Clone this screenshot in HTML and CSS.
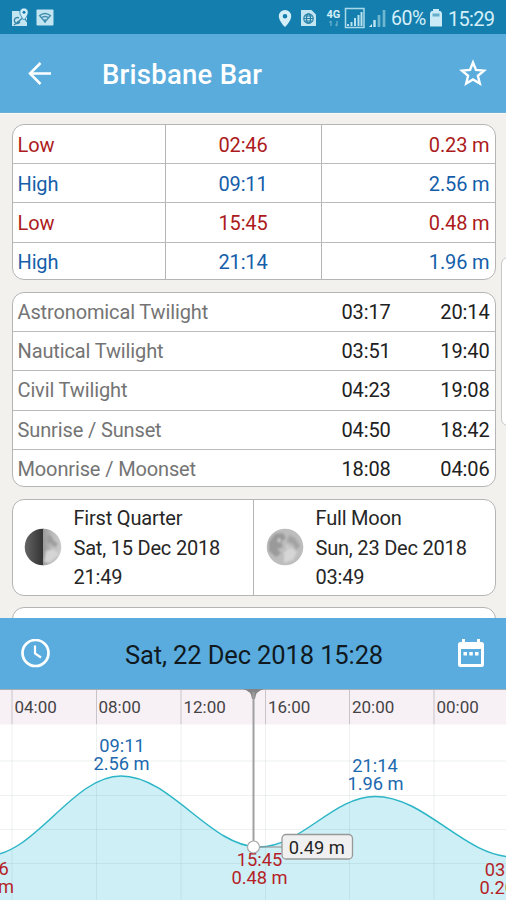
FILE: index.html
```html
<!DOCTYPE html>
<html lang="en">
<head>
<meta charset="utf-8">
<title>Brisbane Bar</title>
<link rel="stylesheet" href="styles.css">
</head>
<body>
<div class="app">
  <div class="status">
    <svg class="status-left" width="40" height="20" viewBox="0 0 40 20">
      <path d="M0 3h12l3 5v10H0z" fill="#c3e5f2"/>
      <path d="M8 14H5M8 14a3 3 0 1 1-1-4M2 17 12 9l3 5" fill="none" stroke="#3486a8" stroke-width="1.3"/>
      <path d="M12 0a4.2 4.2 0 0 0-4.2 4.200C7.800 7.500 12 12 12 12s4.200-4.500 4.200-7.800A4.200 4.200 0 0 0 12 0z" fill="#d5eff9" stroke="#147fae" stroke-width=".8"/>
      <circle cx="12" cy="4.300" r="1.500" fill="#147fae"/>
      <rect x="24.500" y="1.500" width="17" height="16" rx="1" fill="#c3e5f2"/>
      <path d="M27 8q6-5 12 0M29 10q4-3 8 0M28 8l5 6 5-6M33 11v4" fill="none" stroke="#3f8eae" stroke-width="1.300"/>
    </svg>
    <div class="status-right">
      <svg width="110" height="24" viewBox="0 0 110 24">
        <path fill-rule="evenodd" d="M7 4a6.200 6.200 0 0 0-6.200 6.200C.8 15 7 21 7 21s6.200-6 6.200-10.800A6.200 6.200 0 0 0 7 4zm0 4a2.300 2.300 0 1 1 0 4.600A2.300 2.300 0 0 1 7 8z" fill="#d5eff9"/>
        <path d="M23 4h10.500l4.500 4.500V20H23z" fill="#c3e5f2"/>
        <g fill="none" stroke="#247fa4" stroke-width="1.200"><circle cx="30.500" cy="12.500" r="4.700"/><ellipse cx="30.500" cy="12.500" rx="2" ry="4.700"/><path d="M26 12.500h9M27 10h7M27 15h7"/></g>
        <text class="net" x="48.500" y="12">4G</text>
        <path d="M53 20v-5m-1.500 1.500L53 15M59 15v5m-1.500-1.500L59 20" fill="none" stroke="#61adcb" stroke-width="1.400"/>
        <rect x="67.500" y="2.500" width="18.500" height="19" fill="none" stroke="#a9d9ea" stroke-width="1.500"/>
        <path d="M70 20v-2M73.500 20v-4M77 20v-8M80.500 20V9M83.500 20V6" stroke="#b8e2f0" stroke-width="2"/>
        <path d="M91 21h3v-3z" fill="#d5eff9"/>
        <path d="M96.500 21v-7" stroke="#b8e2f0" stroke-width="2.500"/>
        <path d="M101 21V9M106 21V4" stroke="#6fb6d1" stroke-width="2.700"/>
      </svg>
      <span class="pct">60%</span>
      <svg class="battery" width="12" height="20" viewBox="0 0 12 20"><path d="M3 1h6v2h1.500L12 5v13.500H0V5l1.500-2H3z" fill="#c9eaf6"/><path d="M2.500 5.500h7v3h-7z" fill="#67aeca"/></svg>
      <span class="clock">15:29</span>
    </div>
  </div>
  <div class="header">
    <svg class="back" width="24" height="24" viewBox="0 0 24 24"><path d="M23 12.500H2M12.500 2 2 12.500 12.500 23" fill="none" stroke="#fff" stroke-width="2.500"/></svg>
    <div class="title">Brisbane Bar</div>
    <svg class="star" width="28" height="28" viewBox="0 0 28 28"><path d="m14 3.500 3 7.400 8 .7-6.100 5.200 1.900 7.700-6.800-4.100-6.800 4.100 1.900-7.700L3 11.600l8-.7z" fill="none" stroke="#fff" stroke-width="2.400"/></svg>
  </div>

  <div class="content">
    <div class="card tides">
      <div class="row low"><span>Low</span><span>02:46</span><span>0.23 m</span></div>
      <div class="row high"><span>High</span><span>09:11</span><span>2.56 m</span></div>
      <div class="row low"><span>Low</span><span>15:45</span><span>0.48 m</span></div>
      <div class="row high"><span>High</span><span>21:14</span><span>1.96 m</span></div>
    </div>
    <div class="card sun">
      <div class="row"><span>Astronomical Twilight</span><span>03:17</span><span>20:14</span></div>
      <div class="row"><span>Nautical Twilight</span><span>03:51</span><span>19:40</span></div>
      <div class="row"><span>Civil Twilight</span><span>04:23</span><span>19:08</span></div>
      <div class="row"><span>Sunrise / Sunset</span><span>04:50</span><span>18:42</span></div>
      <div class="row"><span>Moonrise / Moonset</span><span>18:08</span><span>04:06</span></div>
    </div>
    <div class="card moons">
      <div class="phase">
        <svg width="38" height="38" viewBox="0 0 38 38">
          <defs>
            <linearGradient id="dark"><stop offset="0" stop-color="#666"/><stop offset="1" stop-color="#303030"/></linearGradient>
            <linearGradient id="lit"><stop offset="0" stop-color="#999"/><stop offset=".5" stop-color="#bcbcbc"/><stop offset="1" stop-color="#ccc"/></linearGradient>
            <filter id="soft"><feGaussianBlur stdDeviation="1.300"/></filter>
            <clipPath id="disc"><circle cx="19" cy="19" r="18.300"/></clipPath>
          </defs>
          <g clip-path="url(#disc)">
            <path d="M0 0h20v38H0z" fill="url(#dark)"/><path d="M19 0h19v38H19z" fill="url(#lit)"/>
            <g filter="url(#soft)"><path d="m23 6 4 2 3 5 4 3-3 3-5-4-3 0z" fill="#9c9c9c"/><path d="m22 23 8-2 5 5-9 9-6-1z" fill="#d5d5d5"/></g>
          </g>
        </svg>
        <div>First Quarter<br>Sat, 15 Dec 2018<br>21:49</div>
      </div>
      <div class="phase">
        <svg width="38" height="38" viewBox="0 0 38 38">
          <g clip-path="url(#disc)">
            <path d="M0 0h38v38H0z" fill="#bdbdbd"/>
            <g filter="url(#soft)"><path d="m3 14 6-8 8-1 3 5-5 4 2 5-6 2 4 4-5 4-7-6z" fill="#9a9a9a"/><path d="m23 7 6 3 5 8-4 4-3-6-6-2z" fill="#a3a3a3"/><path d="m18 24 7-5 6 5-4 8-9 3z" fill="#d6d6d6"/><path d="m12 10 3 2-3 3zM20 17l3 1-2 3z" fill="#ddd"/></g>
          </g>
        </svg>
        <div>Full Moon<br>Sun, 23 Dec 2018<br>03:49</div>
      </div>
    </div>
    <div class="card next"></div>
    <div class="peek"></div>
  </div>

  <div class="datebar">
    <svg width="30" height="30" viewBox="0 0 30 30"><circle cx="14.500" cy="14" r="13" fill="none" stroke="#fff" stroke-width="2.700"/><path d="M14 6.500v8l6 4" fill="none" stroke="#fff" stroke-width="2.200"/></svg>
    <div class="date">Sat, 22 Dec 2018 15:28</div>
    <svg width="28" height="30" viewBox="0 0 28 30"><path fill-rule="evenodd" d="M5 0h3v3h12V0h3v3h1.500A2.500 2.500 0 0 1 27 5.500v20a2.500 2.500 0 0 1-2.500 2.500h-21A2.500 2.500 0 0 1 1 25.500v-20A2.500 2.500 0 0 1 3.500 3H5zM4 10v15h20V10z" fill="#fff"/><path d="M6.500 13H10v3.500H6.500zm5.800 0h3.500v3.500h-3.500zm5.700 0h3.500v3.500H18z" fill="#fff"/></svg>
  </div>

  <svg class="chart" width="506" height="211" viewBox="0 689 506 211">
    <rect x="0" y="689" width="506" height="211" fill="#fff"/>
    <rect x="0" y="689" width="506" height="35.500" fill="#f7f1f6"/>
    <path class="area" d="M-14 856C35 856 72 776 121 776C171 776 210 847 259 847C301 847 333 796.500 375 796.500C426 796.500 464 857 514 857V900H-14z"/>
    <path class="grid" d="M0 761h506M0 795.500h506M0 829.500h506M0 863.500h506M12 724v176M96.500 724v176M181 724v176M265.500 724v176M349.500 724v176M434 724v176"/>
    <path class="ticks" d="M12 690v34M96.500 690v34M181 690v34M265.500 690v34M349.500 690v34M434 690v34"/>
    <path class="curve" d="M-14 856C35 856 72 776 121 776C171 776 210 847 259 847C301 847 333 796.500 375 796.500C426 796.500 464 857 514 857"/>
    <path d="M0 689.200h506" stroke="#8b98a1" stroke-width="1.200"/>
    <path d="M243 689h21q-8.500 2-9 10h-3q-.5-8-9-10z" fill="#858585"/>
    <path d="M253.500 692v150" stroke="#a0a0a0" stroke-width="2"/>
    <path d="M259 847h23" stroke="#999" stroke-width="1.200"/>
    <g class="hours"><text x="14.500" y="713">04:00</text><text x="98.500" y="713">08:00</text><text x="183.500" y="713">12:00</text><text x="268" y="713">16:00</text><text x="352" y="713">20:00</text><text x="436.500" y="713">00:00</text></g>
    <g class="marks high"><text x="122" y="751.500">09:11</text><text x="121.500" y="769.500">2.56 m</text><text x="375" y="772">21:14</text><text x="375.500" y="790">1.96 m</text></g>
    <g class="marks low"><text x="-14" y="874.500">02:46</text><text x="-14" y="892.500">0.23 m</text><text x="259.500" y="865.500">15:45</text><text x="259.500" y="883.500">0.48 m</text><text x="507.500" y="875.500">03:53</text><text x="507.500" y="893.500">0.20 m</text></g>
    <circle cx="253.500" cy="847" r="6" fill="#fff" stroke="#aaa" stroke-width="1.200"/>
    <rect x="282" y="834.500" width="70.500" height="24.500" rx="4" fill="#f0f0f0" stroke="#999" stroke-width="1.300"/>
    <text class="tip" x="316.800" y="853.500">0.49 m</text>
  </svg>
</div>
</body>
</html>
```
FILE: styles.css
```css
* { box-sizing: border-box; }
body { margin: 0; font-family: Roboto, "Liberation Sans", sans-serif; }
.app { width: 506px; height: 900px; overflow: hidden; display: flex; flex-direction: column; background: #f3f1ed; }
svg { display: block; flex: none; }

.status { flex: none; height: 34px; background: #147fae; display: flex; justify-content: space-between; padding: 0 12px; color: #d5eff9; }
.status-left { margin-top: 8px; overflow: visible; }
.status-right { display: flex; align-items: center; height: 36px; font-size: 20px; }
.status-right > svg:first-child { margin: -1px 3px 0 0; }
.status-right .battery { margin: 0 6px 0 5px; }
.pct, .clock { white-space: nowrap; padding-top: 1px; }
.pct { font-size: 19.500px; letter-spacing: -.4px; width: 34px; }
.clock { width: 46px; letter-spacing: -.7px; }
.net { font: bold 11px Roboto, sans-serif; fill: #d5eff9; }

.header { flex: none; height: 79px; background: #5aacdc; display: flex; align-items: center; padding: 0 19px 0 28px; border-bottom: 1px solid #68afd8; }
.title { flex: 1; margin-left: 50px; color: #fff; font-size: 27.500px; letter-spacing: .25px; font-weight: 500; line-height: 32px; padding-top: 4px; }

.content { position: relative; flex: none; height: 505px; overflow: hidden; border-top: 1px solid #fbfaf7; padding: 10px 10.500px 0 11.500px; display: flex; flex-direction: column; gap: 12px; }
.card { flex: none; background: #fff; border: 1.500px solid #b5b5b5; border-radius: 12px; overflow: hidden; }
.row { display: grid; align-items: center; font-size: 20px; line-height: 24px; letter-spacing: -.13px; border-top: 1.500px solid #bbb; }
.row:first-child { border-top: 0; }
.row span:last-child { text-align: right; padding-right: 5px; }
.row span:first-child { padding-left: 5px; }

.tides { height: 156px; display: grid; grid-template-rows: 38px repeat(3, 39.300px); }
.tides .row { grid-template-columns: 152px 156px 1fr; }
.tides .row span { height: 100%; display: flex; align-items: center; padding-top: 1px; }
.tides .row span + span { border-left: 1px solid #b5b5b5; }
.tides .row span:nth-child(2) { justify-content: center; }
.tides .row span:last-child { justify-content: flex-end; }
.low { color: #ac1b20; fill: #b51f28; }
.high { color: #145eaa; fill: #1c69ae; }

.sun { height: 195px; display: grid; grid-template-rows: 38px repeat(4, 39.300px); }
.sun .row { grid-template-columns: 329px 70px 1fr; color: #202020; }
.sun .row span:first-child { color: #747474; }

.moons { height: 97px; display: grid; grid-template-columns: 240px 1fr; }
.phase { display: flex; align-items: center; padding-left: 11px; gap: 12px; font-size: 20px; line-height: 29.500px; letter-spacing: -.2px; color: #262626; }
.phase svg { margin-top: -1px; }
.phase div { padding-top: 2px; }
.phase + .phase { border-left: 1.500px solid #b5b5b5; padding-left: 12px; }
.next { height: 60px; margin-top: -1px; }
.peek { position: absolute; left: 500.500px; top: 143px; width: 20px; height: 169px; background: #fff; border: 1px solid #c6c6c6; border-radius: 7px; }

.datebar { flex: none; height: 71px; background: #59acdd; display: flex; align-items: center; justify-content: space-between; padding: 0 21px; }
.date { font-size: 25.500px; letter-spacing: -.12px; color: #10191f; padding-top: 2px; }

.chart { overflow: hidden; }
.area { fill: #cdeff5; }
.grid { fill: none; stroke: #5f7f88; stroke-opacity: .11; }
.ticks { fill: none; stroke: #c9c4c9; }
.curve { fill: none; stroke: #2bb5c6; stroke-width: 1.500; }
.hours { font-size: 17px; fill: #454345; }
.marks { font-size: 18.300px; text-anchor: middle; }
.tip { font-size: 18.300px; fill: #252525; text-anchor: middle; }
```
